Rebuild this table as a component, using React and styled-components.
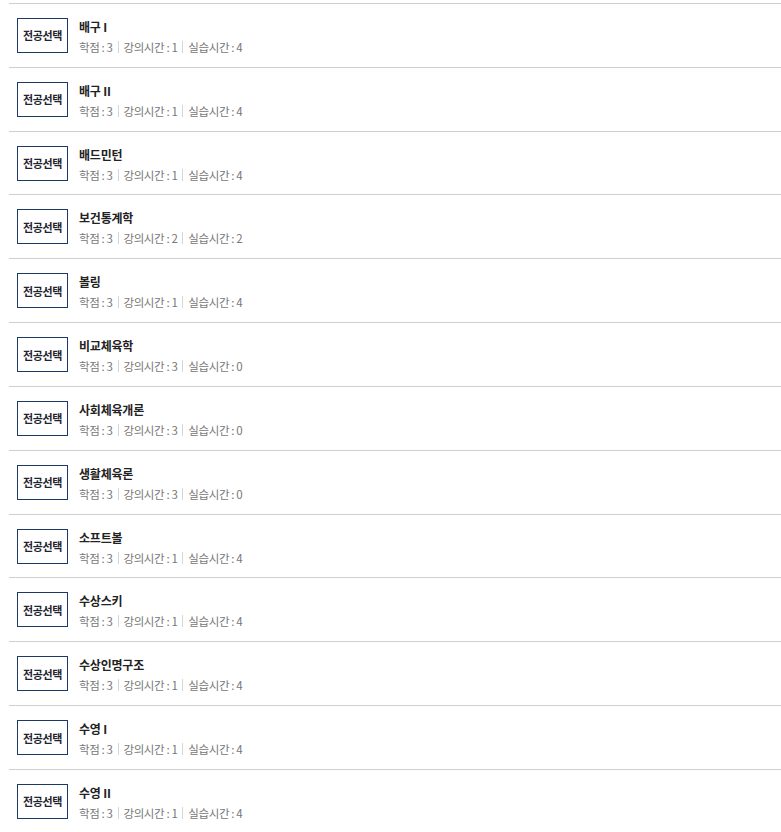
import React from 'react'
import styled, { createGlobalStyle } from 'styled-components'

const Global = createGlobalStyle`
    body {
        margin: 0;
        background: #fff;
        font-family: "Noto Sans CJK KR", "Noto Sans", sans-serif;
    }
`

const List = styled.ul`
    list-style: none;
    margin: 3px 0 0 9px;
    padding: 0;
    border-top: 1px solid #cfcfcf;
`

const Row = styled.li`
    box-sizing: border-box;
    height: 63.83px;
    display: flex;
    align-items: center;
    gap: 11px;
    padding-left: 8px;
    border-bottom: 1px solid #cfcfcf;
`

const Badge = styled.div`
    box-sizing: border-box;
    width: 51px;
    height: 35px;
    border: 1px solid #1d3a66;
    display: grid;
    place-items: center;
    font-size: 11px;
    font-weight: 700;
    color: #1f2430;
    letter-spacing: -0.4px;
    flex-shrink: 0;
`

const Info = styled.div`
    display: flex;
    flex-direction: column;
    padding-top: 3px;
`

const Title = styled.div`
    font-size: 12px;
    font-weight: 700;
    color: #222;
    line-height: 20px;
    letter-spacing: -0.2px;
`

const Meta = styled.div`
    display: flex;
    align-items: center;
    font-size: 11.5px;
    color: #777;
    line-height: 20px;
    letter-spacing: -0.4px;
`

const Sep = styled.span`
    width: 1px;
    height: 12px;
    background: #d6d6d6;
    margin: 0 5px;
`

const courses = [
    ['배구 I', 3, 1, 4],
    ['배구 II', 3, 1, 4],
    ['배드민턴', 3, 1, 4],
    ['보건통계학', 3, 2, 2],
    ['볼링', 3, 1, 4],
    ['비교체육학', 3, 3, 0],
    ['사회체육개론', 3, 3, 0],
    ['생활체육론', 3, 3, 0],
    ['소프트볼', 3, 1, 4],
    ['수상스키', 3, 1, 4],
    ['수상인명구조', 3, 1, 4],
    ['수영 I', 3, 1, 4],
    ['수영 II', 3, 1, 4],
]

const App = () => {
    return (
        <>
            <Global />
            <List>
                {courses.map(([name, credit, lecture, lab]) => (
                    <Row key={name}>
                        <Badge>전공선택</Badge>
                        <Info>
                            <Title>{name}</Title>
                            <Meta>
                                <span>학점 : {credit}</span>
                                <Sep />
                                <span>강의시간 : {lecture}</span>
                                <Sep />
                                <span>실습시간 : {lab}</span>
                            </Meta>
                        </Info>
                    </Row>
                ))}
            </List>
        </>
    )
}

export default App
